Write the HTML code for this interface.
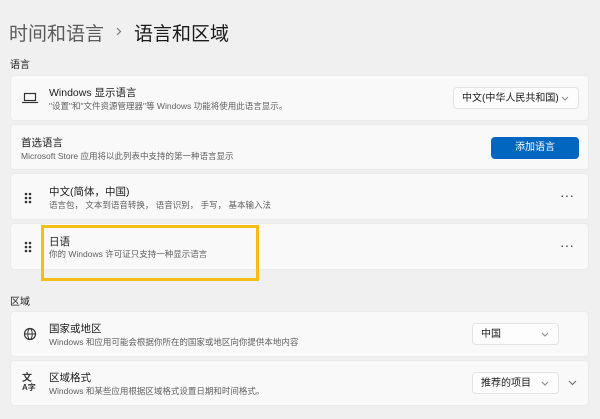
<!DOCTYPE html>
<html><head><meta charset="utf-8"><style>
*{margin:0;padding:0;box-sizing:border-box}
body{width:600px;height:419px;background:#f0f0f0;font-family:"Liberation Sans","Noto Sans CJK SC",sans-serif;position:relative;overflow:hidden;color:#1a1a1a}
.a{position:absolute}
.card{position:absolute;left:10px;width:579px;background:#f9f9f9;border-radius:4px;border:1px solid #ebebeb}
.t{position:absolute;left:38px;font-size:10.5px;color:#1b1b1b}
.s{position:absolute;left:38px;font-size:8.5px;color:#5f5f5f;white-space:nowrap}
.dd{position:absolute;background:#fdfdfd;border:1px solid #e3e3e3;border-radius:4px;font-size:10px;padding:4px 8px;height:22px;line-height:13px}
.dd svg,.chev{position:absolute;right:9px;top:8px}
.dots{position:absolute;right:14px;font-size:14px;color:#444;letter-spacing:0}
.grip{position:absolute;left:13px}
</style></head><body>
<div class="a" style="left:9px;top:19px;font-size:19px;color:#5a5a5a;white-space:nowrap">时间和语言</div>
<svg class="a" style="left:116px;top:27px" width="6" height="9"><path d="M1 1l3.5 3.5L1 8" fill="none" stroke="#777" stroke-width="1.2"/></svg>
<div class="a" style="left:134px;top:19px;font-size:19px;color:#1a1a1a;white-space:nowrap">语言和区域</div>
<div class="a" style="left:10px;top:56px;font-size:10px">语言</div>

<div class="card" style="top:75px;height:46px">
 <svg class="a" style="left:11px;top:16px" width="16" height="12"><rect x="2.5" y="1.5" width="11" height="7" fill="none" stroke="#333" stroke-width="1.2"/><line x1="0" y1="10.5" x2="16" y2="10.5" stroke="#333" stroke-width="1.2"/></svg>
 <div class="t" style="top:9px">Windows 显示语言</div>
 <div class="s" style="top:24px">"设置"和"文件资源管理器"等 Windows 功能将使用此语言显示。</div>
 <div class="dd" style="left:442px;top:11px;width:126px">中文(中华人民共和国)<svg width="8" height="5"><path d="M1 1l3 3 3-3" fill="none" stroke="#888"/></svg></div>
</div>
<div class="card" style="top:124px;height:46px">
 <div class="t" style="left:10px;top:10px">首选语言</div>
 <div class="s" style="left:10px;top:25px">Microsoft Store 应用将以此列表中支持的第一种语言显示</div>
 <div class="a" style="left:480px;top:12px;width:88px;height:22px;background:#0066bf;border-radius:4px;color:#fff;font-size:10px;text-align:center;line-height:22px">添加语言</div>
</div>
<div class="card" style="top:173px;height:47px">
 <svg class="grip" style="top:18px" width="8" height="12"><g fill="#333"><circle cx="2" cy="2" r="1.3"/><circle cx="6" cy="2" r="1.3"/><circle cx="2" cy="6" r="1.3"/><circle cx="6" cy="6" r="1.3"/><circle cx="2" cy="10" r="1.3"/><circle cx="6" cy="10" r="1.3"/></g></svg>
 <div class="t" style="top:10px">中文(简体，中国)</div>
 <div class="s" style="top:25px">语言包， 文本到语音转换， 语音识别， 手写， 基本输入法</div>
 <div class="dots" style="top:13px">···</div>
</div>
<div class="card" style="top:223px;height:47px">
 <svg class="grip" style="top:17px" width="8" height="12"><g fill="#333"><circle cx="2" cy="2" r="1.3"/><circle cx="6" cy="2" r="1.3"/><circle cx="2" cy="6" r="1.3"/><circle cx="6" cy="6" r="1.3"/><circle cx="2" cy="10" r="1.3"/><circle cx="6" cy="10" r="1.3"/></g></svg>
 <div class="t" style="top:10px">日语</div>
 <div class="s" style="top:24px">你的 Windows 许可证只支持一种显示语言</div>
 <div class="dots" style="top:13px">···</div>
</div>
<div class="a" style="left:41px;top:225px;width:218px;height:56px;border:3px solid #f6bd16"></div>

<div class="a" style="left:10px;top:293px;font-size:10px">区域</div>
<div class="card" style="top:311px;height:46px">
 <svg class="a" style="left:12px;top:15px" width="14" height="14"><circle cx="7" cy="7" r="5.5" fill="none" stroke="#333" stroke-width="1.2"/><ellipse cx="7" cy="7" rx="2.2" ry="5.5" fill="none" stroke="#333" stroke-width="1"/><line x1="1.5" y1="7" x2="12.5" y2="7" stroke="#333"/></svg>
 <div class="t" style="top:9px">国家或地区</div>
 <div class="s" style="top:24px">Windows 和应用可能会根据你所在的国家或地区向你提供本地内容</div>
 <div class="dd" style="left:461px;top:11px;width:87px">中国<svg width="8" height="5"><path d="M1 1l3 3 3-3" fill="none" stroke="#888"/></svg></div>
</div>
<div class="card" style="top:360px;height:46px">
 <div class="a" style="left:11px;top:13px;font-size:10px;font-weight:bold;color:#333;line-height:9px">文<br><span style="font-size:8px">A字</span></div>
 <div class="t" style="top:9px">区域格式</div>
 <div class="s" style="top:24px">Windows 和某些应用根据区域格式设置日期和时间格式。</div>
 <div class="dd" style="left:461px;top:11px;width:87px">推荐的项目<svg width="8" height="5"><path d="M1 1l3 3 3-3" fill="none" stroke="#888"/></svg></div>
 <svg class="a" style="left:557px;top:19px" width="9" height="6"><path d="M1 1l3.5 3.5L8 1" fill="none" stroke="#666"/></svg>
</div>
</body></html>
